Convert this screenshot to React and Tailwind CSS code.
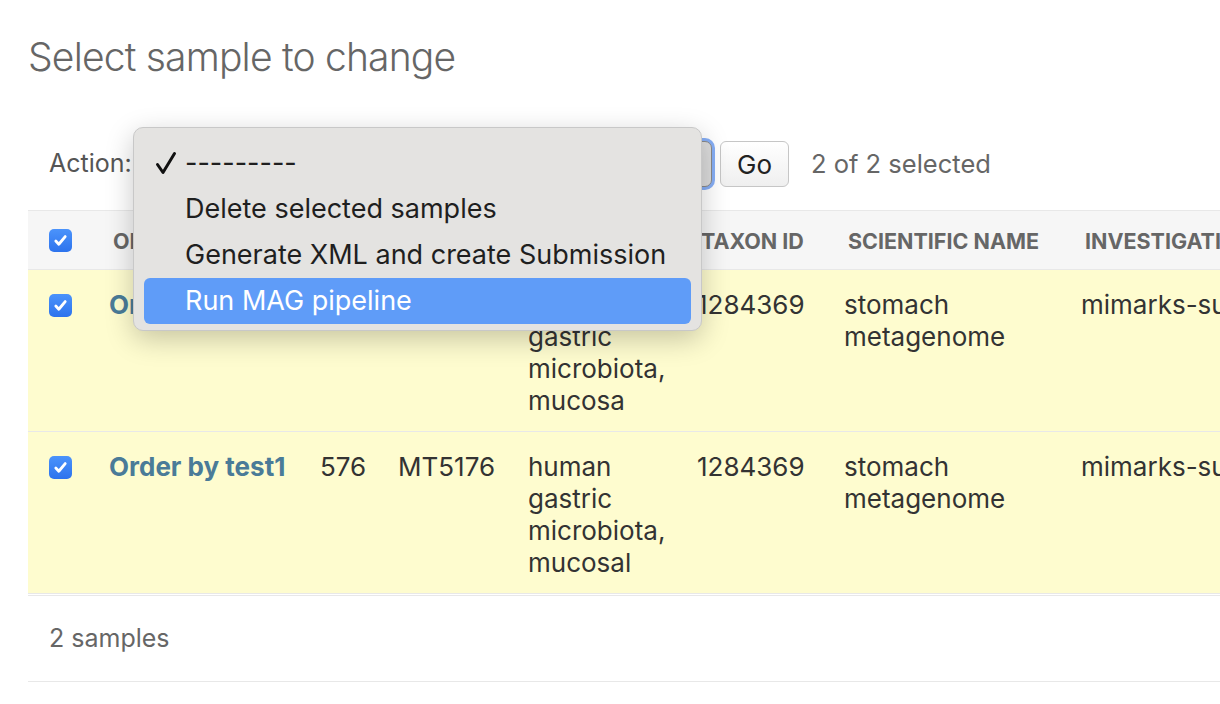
import React from 'react';

const rows = [
  { order: 'Order by test1', id: '575', sample: 'MT5175', medium: ['human', 'gastric', 'microbiota,', 'mucosa'], taxon: '1284369', sci: ['stomach', 'metagenome'], inv: 'mimarks-survey' },
  { order: 'Order by test1', id: '576', sample: 'MT5176', medium: ['human', 'gastric', 'microbiota,', 'mucosal'], taxon: '1284369', sci: ['stomach', 'metagenome'], inv: 'mimarks-survey' },
];

function Check() {
  return (
    <div className="w-[23px] h-[23px] rounded-[5px] bg-gradient-to-b from-[#4b93fb] to-[#2d73ed] flex items-center justify-center">
      <svg width="15" height="15" viewBox="0 0 16 16" fill="none">
        <path d="M3 8.5l3.2 3.5L13 3.8" stroke="#fff" strokeWidth="3" strokeLinecap="round" strokeLinejoin="round" />
      </svg>
    </div>
  );
}

export default function App() {
  return (
    <div className="w-[1220px] h-[704px] overflow-hidden bg-white relative font-['Inter',sans-serif]">
      <h1 className="pl-[28px] pt-[35px] text-[39px] leading-[44px] font-light tracking-[-0.8px] text-[#666]">Select sample to change</h1>

      {/* actions bar */}
      <div className="flex items-center mt-[62px] ml-[49px] h-[46px]">
        <span className="w-[83px] text-[25px] text-[#555]">Action:</span>
        <div className="ml-[8px] w-[572px] h-[46px] rounded-[7px] bg-[#dcdcdc] border border-[#8a8a8a] ring-[3px] ring-[#86aef5]"></div>
        <button className="ml-[8px] w-[69px] h-[46px] rounded-[6px] border border-[#c6c6c6] bg-gradient-to-b from-white to-[#efefef] text-[26px] text-[#222]">Go</button>
        <span className="ml-[22px] text-[25.5px] text-[#666]">2 of 2 selected</span>
      </div>

      <div className="mt-[23px] ml-[28px]">
        <table className="table-fixed border-collapse w-[1500px]">
          <colgroup>
            <col className="w-[67px]" />
            <col className="w-[211px]" />
            <col className="w-[78px]" />
            <col className="w-[130px]" />
            <col className="w-[169px]" />
            <col className="w-[147px]" />
            <col className="w-[237px]" />
            <col className="w-[461px]" />
          </colgroup>
          <thead>
            <tr className="bg-[#f6f6f6] border-t border-b border-[#e8e8e8] h-[59px] text-left text-[21.5px] font-bold text-[#666] uppercase">
              <th className="pl-[21px]"><Check /></th>
              <th className="pl-[18px] pt-[3px]">Order</th>
              <th className="pl-[18px] pt-[3px]">Id</th>
              <th className="pl-[18px] pt-[3px]">Sample</th>
              <th className="pl-[18px] pt-[3px]">Env medium</th>
              <th className="pl-[18px] pt-[3px]">Taxon ID</th>
              <th className="pl-[18px] pt-[3px]">Scientific name</th>
              <th className="pl-[18px] pt-[3px] whitespace-nowrap">Investigation type</th>
            </tr>
          </thead>
          <tbody>
            {rows.map((r, i) => (
              <tr key={i} className="bg-[#fefccf] border-b border-[#e8e8e8] align-top text-[26px] leading-[32px] text-[#333]">
                <td className="pl-[21px] pt-[19px] pb-[14px]"><div className="h-[32px] flex items-center"><Check /></div></td>
                <td className="pl-[14px] pt-[19px] pb-[14px] font-bold text-[#4a7b98]">{r.order}</td>
                <td className="pl-[14px] pt-[19px] pb-[14px]">{r.id}</td>
                <td className="pl-[14px] pt-[19px] pb-[14px]">{r.sample}</td>
                <td className="pl-[14px] pt-[19px] pb-[14px]">{r.medium.map((l) => <div key={l}>{l}</div>)}</td>
                <td className="pl-[14px] pt-[19px] pb-[14px]">{r.taxon}</td>
                <td className="pl-[14px] pt-[19px] pb-[14px]">{r.sci.map((l) => <div key={l}>{l}</div>)}</td>
                <td className="pl-[14px] pt-[19px] pb-[14px] whitespace-nowrap">{r.inv}</td>
              </tr>
            ))}
          </tbody>
        </table>
        <div className="mt-[1px] border-t border-b border-[#e8e8e8] h-[87px] flex items-center pl-[21px] text-[25px] text-[#666]">2 samples</div>
      </div>

      {/* open select menu */}
      <div className="absolute left-[133px] top-[127px] w-[569px] h-[204px] rounded-[10px] bg-[#e4e3e1] border border-[#c8c8c8] shadow-[0_8px_28px_rgba(0,0,0,0.22)] pt-[12px] px-[10px] text-[27px] text-[#1f1f1f]">
        <div className="h-[46px] flex items-center relative pl-[41px]">
          <svg className="absolute left-[11px] top-[11px]" width="22" height="24" viewBox="0 0 22 24" fill="none">
            <path d="M2.5 13.5l5.5 8L19.5 2.5" stroke="#111" strokeWidth="3" strokeLinecap="round" strokeLinejoin="round" />
          </svg>
          ---------
        </div>
        <div className="h-[46px] flex items-center pl-[41px]">Delete selected samples</div>
        <div className="h-[46px] flex items-center pl-[41px]">Generate XML and create Submission</div>
        <div className="h-[46px] flex items-center pl-[41px] rounded-[6px] bg-[#5f9cf8] text-white">Run MAG pipeline</div>
      </div>
    </div>
  );
}
